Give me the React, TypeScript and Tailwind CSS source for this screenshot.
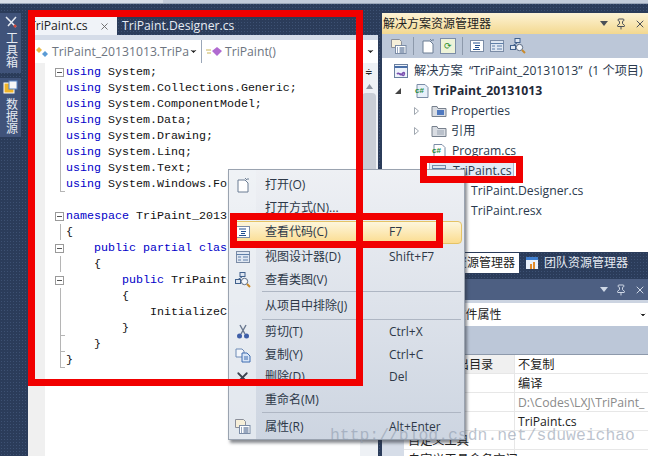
import React from 'react';
import { ChevronDown, Pin, X } from 'lucide-react';

const cjk = "font-['Open_Sans','Noto_Sans_CJK_SC',sans-serif]";
const dotted = 'bg-[#2b3c5a] bg-[radial-gradient(#3d5173_1px,transparent_1px)] bg-[length:3px_3px]';

const FileIcon = () => (
  <svg width="16" height="16" viewBox="0 0 16 16">
    <path d="M3 3h7l3 3v9H3z" fill="#fff" stroke="#6b7c93" />
    <path d="M10 1l2 2M13 1v2" stroke="#6b7c93" fill="none" />
  </svg>
);

const CodeIcon = () => (
  <svg width="16" height="16" viewBox="0 0 16 16">
    <rect x="1.500" y="2.500" width="13" height="11" fill="#fff" stroke="#7b8ca6" />
    <path d="M4 5h7M6 7.500h5M6 9.500h4M4 11.500h7" stroke="#24508f" />
  </svg>
);

const DesignIcon = () => (
  <svg width="16" height="16" viewBox="0 0 16 16">
    <rect x="1.500" y="2.500" width="13" height="11" fill="#dfe7f2" stroke="#7b8ca6" />
    <path d="M1.500 5.500h13M3 8h3M3 11h3M8 8h5M8 11h5" stroke="#5f7fa8" />
  </svg>
);

const ClassIcon = () => (
  <svg width="18" height="18" viewBox="0 0 18 18">
    <rect x="6" y="1.500" width="5" height="4" fill="#dfe7f2" stroke="#40608c" />
    <rect x="1.500" y="8.500" width="5" height="4" fill="#dfe7f2" stroke="#40608c" />
    <path d="M8 6L4 8.500" stroke="#40608c" />
    <circle cx="10.500" cy="10.500" r="3.200" fill="#f4f7fb" stroke="#5c6d85" />
    <path d="M13 13l3 3" stroke="#c98a2b" strokeWidth="2" />
  </svg>
);

const ScissorsIcon = () => (
  <svg width="14" height="16" viewBox="0 0 14 16">
    <path d="M4 1l5 9M10 1l-5 9" stroke="#69788f" strokeWidth="1.400" fill="none" />
    <circle cx="3.500" cy="12" r="2.500" fill="#3f5fa8" />
    <circle cx="10.500" cy="12" r="2.500" fill="#3f5fa8" />
  </svg>
);

const CopyIcon = () => (
  <svg width="16" height="16" viewBox="0 0 16 16">
    <path d="M1 2h6l2 2v6H1z" fill="#f3f6fb" stroke="#6d89b5" />
    <path d="M7 6h5l3 3v6H7z" fill="#d8e5f7" stroke="#3f6db0" />
    <path d="M9 10h4M9 12h4" stroke="#3f6db0" />
  </svg>
);

const PropsIcon = () => (
  <svg width="17" height="17" viewBox="0 0 17 17">
    <path d="M1.500 1.500h8l2 2v6h-10z" fill="#f6efd9" stroke="#8b8f99" />
    <rect x="5.500" y="7.500" width="10.500" height="8" fill="#fff" stroke="#7b8ca6" />
    <path d="M7 10h1M7 12h1M7 14h1M9.500 10h5M9.500 12h5M9.500 14h5" stroke="#33507f" />
  </svg>
);

const CsIcon = ({ project = false }: { project?: boolean }) => (
  <svg width="16" height="16" viewBox="0 0 16 16">
    <path d="M3 1.500h8l3 3v10H3z" fill={project ? '#e8f0fa' : '#fff'} stroke="#7b8ca6" />
    <text x="1" y="10" fontSize="8" fontWeight="700" fill="#1d8a3a" fontFamily="Liberation Sans, sans-serif">c#</text>
  </svg>
);

const FolderIcon = ({ color }: { color: string }) => (
  <svg width="16" height="14" viewBox="0 0 16 14">
    <path d="M1 2.500h5l1 2h8v8H1z" fill="#d9dde3" stroke="#77808d" />
    <rect x="6" y="6" width="7" height="5" fill={color} />
  </svg>
);

const Caret = ({ filled = false }: { filled?: boolean }) => (
  <svg width="8" height="10" viewBox="0 0 8 10">
    {filled ? <path d="M1 8h6V2z" fill="#444" /> : <path d="M1.500 1.500l4 3.500-4 3.500z" fill="#fff" stroke="#a0a7b0" />}
  </svg>
);

type CodeLine = { kw?: string; text?: string; fold?: boolean; tick?: boolean };

const codeLines: CodeLine[] = [
  { kw: 'using', text: ' System;', fold: true },
  { kw: 'using', text: ' System.Collections.Generic;' },
  { kw: 'using', text: ' System.ComponentModel;' },
  { kw: 'using', text: ' System.Data;' },
  { kw: 'using', text: ' System.Drawing;' },
  { kw: 'using', text: ' System.Linq;' },
  { kw: 'using', text: ' System.Text;' },
  { kw: 'using', text: ' System.Windows.Fo', tick: true },
  {},
  { kw: 'namespace', text: ' TriPaint_2013', fold: true },
  { text: '{' },
  { kw: '    public partial clas', text: '', fold: true },
  { text: '    {' },
  { kw: '        public', text: ' TriPaint', fold: true },
  { text: '        {' },
  { text: '            InitializeC' },
  { text: '        }', tick: true },
  { text: '    }', tick: true },
  { text: '}', tick: true },
];

type MenuRow = { label: string; key?: string; icon?: React.ReactNode; h: number; active?: boolean; sep?: boolean };

const menuRows: MenuRow[] = [
  { label: '打开(O)', icon: <FileIcon />, h: 22 },
  { label: '打开方式(N)...', h: 23 },
  { label: '查看代码(C)', key: 'F7', icon: <CodeIcon />, h: 26, active: true },
  { label: '视图设计器(D)', key: 'Shift+F7', icon: <DesignIcon />, h: 24 },
  { label: '查看类图(V)', icon: <ClassIcon />, h: 22, sep: true },
  { label: '从项目中排除(J)', h: 27, sep: true },
  { label: '剪切(T)', key: 'Ctrl+X', icon: <ScissorsIcon />, h: 24 },
  { label: '复制(Y)', key: 'Ctrl+C', icon: <CopyIcon />, h: 22 },
  { label: '删除(D)', key: 'Del', icon: <X size={17} strokeWidth={2.5} className="text-[#3c4350]" />, h: 22 },
  { label: '重命名(M)', h: 24, sep: true },
  { label: '属性(R)', key: 'Alt+Enter', icon: <PropsIcon />, h: 27 },
];

const propRows = [
  { name: '复制到输出目录', value: '不复制', hi: true },
  { name: '生成操作', value: '编译' },
  { name: '完整路径', value: 'D:\\Codes\\LXJ\\TriPaint_', muted: true },
  { name: '文件名', value: 'TriPaint.cs' },
  { name: '自定义工具', value: '' },
  { name: '自定义工具命名空间', value: '' },
];

const PanelButtons = ({ dark = false }: { dark?: boolean }) => (
  <div className={`ml-auto flex items-center gap-[7px] pr-[1px] ${dark ? 'text-[#cfd8e6]' : 'text-[#4a4f57]'}`}>
    <svg width="8" height="5" viewBox="0 0 8 5"><path d="M0 0h8L4 5z" fill="currentColor" /></svg>
    <Pin size={12} />
    <X size={12} />
  </div>
);

function Editor() {
  return (
    <div className="w-[350px] flex flex-col shrink-0">
      <div className="h-[18px] flex items-end shrink-0">
        <div className="w-[89px] h-[18px] bg-[#f0f3f8] text-[#222] text-[12.2px] leading-[18px] pl-[1px] flex items-center justify-between pr-[7px]">
          <span>TriPaint.cs</span>
          <X size={11} className="text-[#666]" />
        </div>
        <span className="pl-[5px] text-[#e6ebf3] text-[12.2px] leading-[18px]">TriPaint.Designer.cs</span>
      </div>
      <div className="h-[5px] bg-[#d5dce8] shrink-0" />
      <div className="h-[23px] bg-[#e8ecf3] flex shrink-0 text-[#6d7480] text-[12.2px] leading-[23px]">
        <div className="w-[174px] bg-white flex items-center pl-[7px] border-r border-[#9aa6b8]">
          <svg width="15" height="14" viewBox="0 0 15 14" className="shrink-0"><path d="M1 5l3-3 3 3-3 3z" fill="#e9b949" /><path d="M7 9l3-3 3 3-3 3z" fill="#5a9bd5" /></svg>
          <span className="pl-[2px]">TriPaint_20131013.TriPa</span>
          <ChevronDown size={9} className="ml-auto mr-[3px] text-[#222]" fill="#222" />
        </div>
        <div className="flex-1 bg-white flex items-center pl-[4px]">
          <svg width="18" height="14" viewBox="0 0 18 14" className="shrink-0"><path d="M0 5h5M1 8h4" stroke="#c9b458" /><path d="M11 2l5 4-5 5-5-5z" fill="#b06ad0" /></svg>
          <span className="pl-[1px]">TriPaint()</span>
          <ChevronDown size={9} className="ml-auto mr-[3px] text-[#222]" fill="#222" />
        </div>
      </div>
      <div className="flex-1 bg-white flex min-h-0">
        <div className="w-[17px] bg-[#f0f0f0] shrink-0" />
        <div className="flex-1 relative font-['Liberation_Mono',monospace] text-[11.67px] leading-[16px] pt-[1px]">
          {codeLines.map((line, i) => (
            <div key={i} className="h-[16px] flex">
              <div className="w-[21px] shrink-0 relative">
                {line.fold ? (
                  <div className="absolute left-[10px] top-[4px] w-[9px] h-[9px] border border-[#9a9a9a] bg-white flex items-center justify-center">
                    <div className="w-[5px] h-px bg-[#555]" />
                  </div>
                ) : (
                  <div className={`absolute left-[15px] top-0 h-[16px] border-l border-[#b5b5b5] ${line.kw === undefined && line.text === undefined ? 'hidden' : ''}`} />
                )}
                {line.tick && <div className="absolute left-[15px] top-[15px] w-[5px] h-px bg-[#b5b5b5]" />}
              </div>
              <pre className="font-[inherit] text-[#111]">
                {line.kw && <span className="text-[#0000c8]">{line.kw}</span>}
                {line.text}
              </pre>
            </div>
          ))}
        </div>
        <div className="w-[18px] bg-[#eef1f5] shrink-0 flex flex-col items-center pt-[3px]">
          <div className="w-[11px] h-[12px] text-[9px] leading-[12px] text-center text-[#222]">≑</div>
          <svg width="7" height="5" viewBox="0 0 7 5" className="mt-[6px]"><path d="M0 5h7L3.500 0z" fill="#8d95a1" /></svg>
          <div className="w-[14px] h-[170px] bg-[#c9ced6] mt-[4px] rounded-sm" />
        </div>
      </div>
    </div>
  );
}

function SolutionPanel() {
  return (
    <div className="h-[239px] flex flex-col shrink-0">
      <div className="h-[21px] flex items-center px-[1px] bg-gradient-to-b from-[#fdf3d5] to-[#f3d88f] text-[#222] text-[12px] shrink-0">
        <span>解决方案资源管理器</span>
        <PanelButtons />
      </div>
      <div className="h-[24px] bg-[#bcc7d8] flex items-center gap-[4px] pl-[8px] shrink-0">
        <PropsIcon />
        <div className="w-px h-[18px] bg-[#8d99ab] mx-[2px]" />
        <FileIcon />
        <div className="w-[16px] h-[16px] bg-[#eef3d8] border border-[#7b8ca6] text-[9px] leading-[14px] text-center text-[#2a8b2a]">⟳</div>
        <div className="w-px h-[18px] bg-[#8d99ab] mx-[2px]" />
        <CodeIcon />
        <DesignIcon />
        <ClassIcon />
      </div>
      <div className="flex-1 bg-white text-[#2b3a4e] text-[12.2px] pt-[3px] flex flex-col">
        <div className="h-[20px] flex items-center pl-[11px] gap-[5px]">
          <svg width="16" height="16" viewBox="0 0 16 16"><rect x="1.500" y="1.500" width="13" height="13" fill="#eef3fb" stroke="#6a7f9f" /><path d="M1.500 4h13" stroke="#4a6fa8" strokeWidth="2" /><path d="M4 11c2-3 3 3 5 0s3-1 2 1-4-3-7-1z" fill="none" stroke="#7a4fb0" strokeWidth="1.500" /></svg>
          <span className="whitespace-pre">解决方案  “TriPaint_20131013”  (1 个项目)</span>
        </div>
        <div className="h-[20px] flex items-center pl-[12px]">
          <Caret filled />
          <span className="pl-[12px]"><CsIcon project /></span>
          <span className="pl-[3px] font-bold text-[#1f2a3a]">TriPaint_20131013</span>
        </div>
        <div className="h-[20px] flex items-center pl-[31px]">
          <Caret />
          <span className="pl-[10px]"><FolderIcon color="#4f79c0" /></span>
          <span className="pl-[4px]">Properties</span>
        </div>
        <div className="h-[20px] flex items-center pl-[31px]">
          <Caret />
          <span className="pl-[10px]"><FolderIcon color="#b9c0ca" /></span>
          <span className="pl-[4px]">引用</span>
        </div>
        <div className="h-[20px] flex items-center pl-[49px]">
          <CsIcon />
          <span className="pl-[5px]">Program.cs</span>
        </div>
        <div className="h-[20px] flex items-center pl-[47px]">
          <div className="h-[18px] flex items-center pl-[1px] pr-[1px] bg-[#e3ebf6] border border-[#a9b9d0]">
            <DesignIcon />
            <span className="pl-[6px]">TriPaint.cs</span>
          </div>
        </div>
        <div className="h-[20px] flex items-center pl-[89px]">TriPaint.Designer.cs</div>
        <div className="h-[20px] flex items-center pl-[89px]">TriPaint.resx</div>
      </div>
    </div>
  );
}

function PropertiesPanel() {
  return (
    <div className="flex-1 flex flex-col min-h-0">
      <div className="h-[20px] flex text-[12px] leading-[20px] shrink-0 mt-[1px]">
        <div className="w-[137px] bg-white text-[#222] text-right pr-[4px] whitespace-nowrap">解决方案资源管理器</div>
        <div className="flex items-center pl-[6px] gap-[5px] text-[#e6ebf3]">
          <svg width="14" height="14" viewBox="0 0 14 14"><rect x="1" y="1" width="12" height="12" fill="#e9f0fa" /><path d="M1 1h12v3H1z" fill="#3f7fd0" /><path d="M5 13V8h2v5zM8 13V6h2v7z" fill="#e08a2a" /></svg>
          <span>团队资源管理器</span>
        </div>
      </div>
      <div className="h-[6px] shrink-0" />
      <div className="h-[21px] bg-[#4d5f82] flex items-center px-[1px] shrink-0">
        <PanelButtons dark />
      </div>
      <div className="h-[3px] bg-[#ccd4e1] shrink-0" />
      <div className="h-[23px] bg-white text-[#222] text-[12px] leading-[23px] pl-[57px] flex items-center shrink-0">
        <span>cs 文件属性</span>
        <ChevronDown size={8} className="ml-auto mr-[1px]" fill="#222" />
      </div>
      <div className="h-[29px] bg-[#bcc7d8] border-b border-[#8d99ab] shrink-0" />
      <div className="flex-1 flex bg-white min-h-0 overflow-hidden text-[12.2px] text-[#222]">
        <div className="w-[22px] bg-[#d6dde8] shrink-0" />
        <div className="flex-1 flex flex-col">
          {propRows.map((row) => (
            <div key={row.name} className="h-[19px] flex shrink-0 border-b border-[#e7e7e7] leading-[20px]">
              <div className={`w-[111px] pl-[4px] border-r border-[#e7e7e7] whitespace-nowrap ${row.hi ? 'bg-[#f0f0f0]' : ''}`}>{row.name}</div>
              <div className={`pl-[3px] whitespace-nowrap ${row.muted ? 'text-[#8a8a8a]' : ''}`}>{row.value}</div>
            </div>
          ))}
        </div>
      </div>
    </div>
  );
}

function ContextMenu() {
  return (
    <div className={`absolute left-[228px] top-[169px] w-[237px] h-[271px] border border-[#9aa3b0] bg-gradient-to-b from-[#eef0f4] to-[#cdd5e1] shadow-[2px_3px_3px_rgba(40,45,55,0.55)] pt-[4px] text-[#2d3848] text-[12px] ${cjk}`}>
      <div className="absolute left-0 top-0 bottom-0 w-[27px] bg-[#f0f3f6]/60" />
      {menuRows.map((row) => (
        <React.Fragment key={row.label}>
          <div className="relative flex items-center" style={{ height: row.h }}>
            {row.active && <div className="absolute left-[3px] right-[2px] top-[2px] bottom-[1px] rounded-sm border border-[#e5c365] bg-gradient-to-b from-[#fdf6dc] to-[#fbdc8e]" />}
            <div className="relative w-[27px] shrink-0 flex items-center justify-center">{row.icon}</div>
            <span className="relative pl-[9px] w-[133px] shrink-0 whitespace-nowrap">{row.label}</span>
            {row.key && <span className="relative whitespace-nowrap">{row.key}</span>}
          </div>
          {row.sep && <div className="relative ml-[33px] mr-[3px] h-px bg-[#aeb6c3]" />}
        </React.Fragment>
      ))}
    </div>
  );
}

export default function App() {
  return (
    <div className={`relative w-[648px] h-[456px] overflow-hidden flex flex-col ${dotted} ${cjk}`}>
      <div className="h-[4px] bg-[#c3ccda] shrink-0 border-b border-[#9aa6b8]">
        <div className="w-[163px] h-[3px] bg-[#d9dfe8]" />
      </div>
      <div className="flex-1 flex min-h-0 pt-[13px]">
        <div className="w-[28px] shrink-0 -mt-[4px] flex flex-col gap-[5px]">
          <div className="w-[21px] h-[60px] bg-[#40537a] flex flex-col items-center pt-[2px] text-[#e6ebf3]">
            <svg width="14" height="14" viewBox="0 0 14 14"><path d="M2 2l10 10M12 2L4 11" stroke="#e6ebf3" strokeWidth="1.500" /><circle cx="11" cy="11" r="1.500" fill="#d94a3a" /></svg>
            <span className="[writing-mode:vertical-rl] text-[12px] leading-[14px] pt-[3px]">工具箱</span>
          </div>
          <div className="w-[21px] h-[59px] bg-[#40537a] flex flex-col items-center pt-[2px] text-[#e6ebf3]">
            <svg width="15" height="15" viewBox="0 0 15 15"><rect x="1" y="3" width="10" height="10" fill="#f0b429" stroke="#fff" /><rect x="6" y="1" width="8" height="8" fill="#f7f7f7" stroke="#5a87c5" /></svg>
            <span className="[writing-mode:vertical-rl] text-[12px] leading-[14px] pt-[3px]">数据源</span>
          </div>
        </div>
        <Editor />
        <div className="w-[266px] ml-[4px] -mt-[4px] flex flex-col shrink-0">
          <SolutionPanel />
          <PropertiesPanel />
        </div>
      </div>

      <ContextMenu />

      {/* red annotation boxes drawn on top of the screenshot */}
      <div className="absolute left-[28px] top-[10px] w-[335px] h-[376px] border-[7px] border-[#f10000]" />
      <div className="absolute left-[230px] top-[213px] w-[213px] h-[35px] border-[7px] border-[#f10000]" />
      <div className="absolute left-[420px] top-[156px] w-[103px] h-[27px] border-[7px] border-[#f10000]" />

      <div className="absolute left-[330px] top-[426px] font-['Liberation_Mono',monospace] text-[16.4px] leading-[20px] text-[#8f9bad]/60 whitespace-nowrap">
        http://blog.csdn.net/sduweichao
      </div>
    </div>
  );
}
